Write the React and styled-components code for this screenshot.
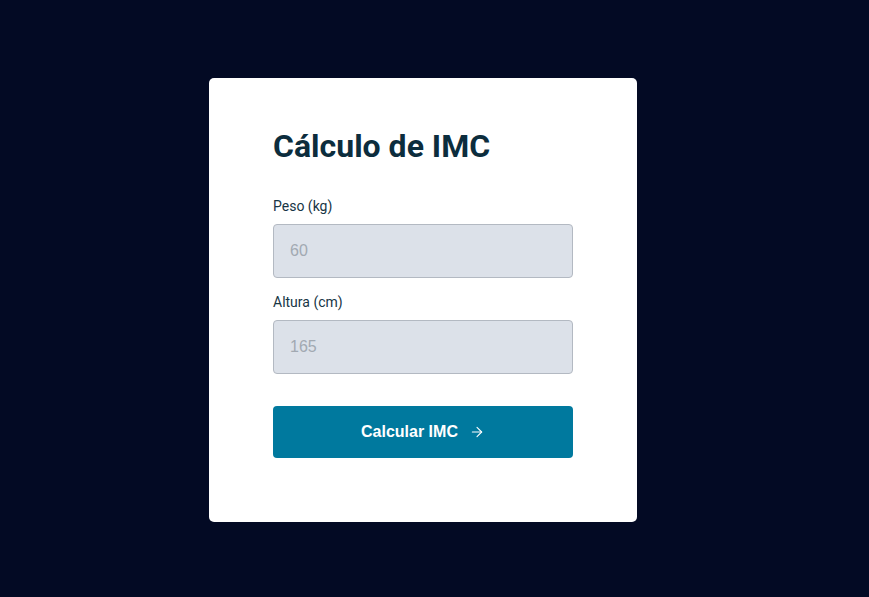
import React, { useState } from 'react';
import styled, { createGlobalStyle } from 'styled-components';
import { ArrowRight } from 'lucide-react';

const GlobalStyle = createGlobalStyle`
  html, body {
    margin: 0;
    padding: 0;
    background: #030a24;
    font-family: Roboto, "Liberation Sans", sans-serif;
  }
  * { box-sizing: border-box; }
`;

const Page = styled.main`
  min-height: 597px;
  display: flex;
  align-items: center;
  justify-content: center;
  padding: 3px 23px 0 0;
`;

const Card = styled.form`
  width: 428px;
  height: 444px;
  background: #ffffff;
  border-radius: 5px;
  padding: 50px 64px 64px;
  display: flex;
  flex-direction: column;
`;

const Title = styled.h1`
  margin: 0 0 31px;
  font-size: 32px;
  line-height: 37px;
  font-weight: 700;
  color: #0c2d3d;
`;

const Field = styled.div`
  display: flex;
  flex-direction: column;
  & + & {
    margin-top: 14px;
  }
`;

const Label = styled.label`
  font-size: 14px;
  line-height: 20px;
  color: #173545;
  margin-bottom: 8px;
`;

const Input = styled.input`
  height: 54px;
  width: 100%;
  border: 1px solid #b3b9c2;
  border-radius: 4px;
  background: #dce1e9;
  padding: 0 16px;
  font-family: "Liberation Sans", Arial, sans-serif;
  font-size: 16px;
  color: #173545;
  outline: none;
  &::placeholder {
    color: #a2a9b2;
  }
`;

const Button = styled.button`
  margin-top: 32px;
  height: 52px;
  width: 100%;
  border: 0;
  border-radius: 4px;
  background: #00799e;
  color: #ffffff;
  font-family: "Liberation Sans", Arial, sans-serif;
  font-size: 16px;
  font-weight: 700;
  display: flex;
  align-items: center;
  justify-content: center;
  gap: 11px;
  cursor: pointer;
`;

export default function App() {
  const [peso, setPeso] = useState('');
  const [altura, setAltura] = useState('');

  const handleSubmit = (e) => {
    e.preventDefault();
  };

  return (
    <>
      <GlobalStyle />
      <Page>
        <Card onSubmit={handleSubmit}>
          <Title>Cálculo de IMC</Title>
          <Field>
            <Label htmlFor="peso">Peso (kg)</Label>
            <Input
              id="peso"
              placeholder="60"
              value={peso}
              onChange={(e) => setPeso(e.target.value)}
            />
          </Field>
          <Field>
            <Label htmlFor="altura">Altura (cm)</Label>
            <Input
              id="altura"
              placeholder="165"
              value={altura}
              onChange={(e) => setAltura(e.target.value)}
            />
          </Field>
          <Button type="submit">
            Calcular IMC
            <ArrowRight size={16} strokeWidth={1.6} />
          </Button>
        </Card>
      </Page>
    </>
  );
}
